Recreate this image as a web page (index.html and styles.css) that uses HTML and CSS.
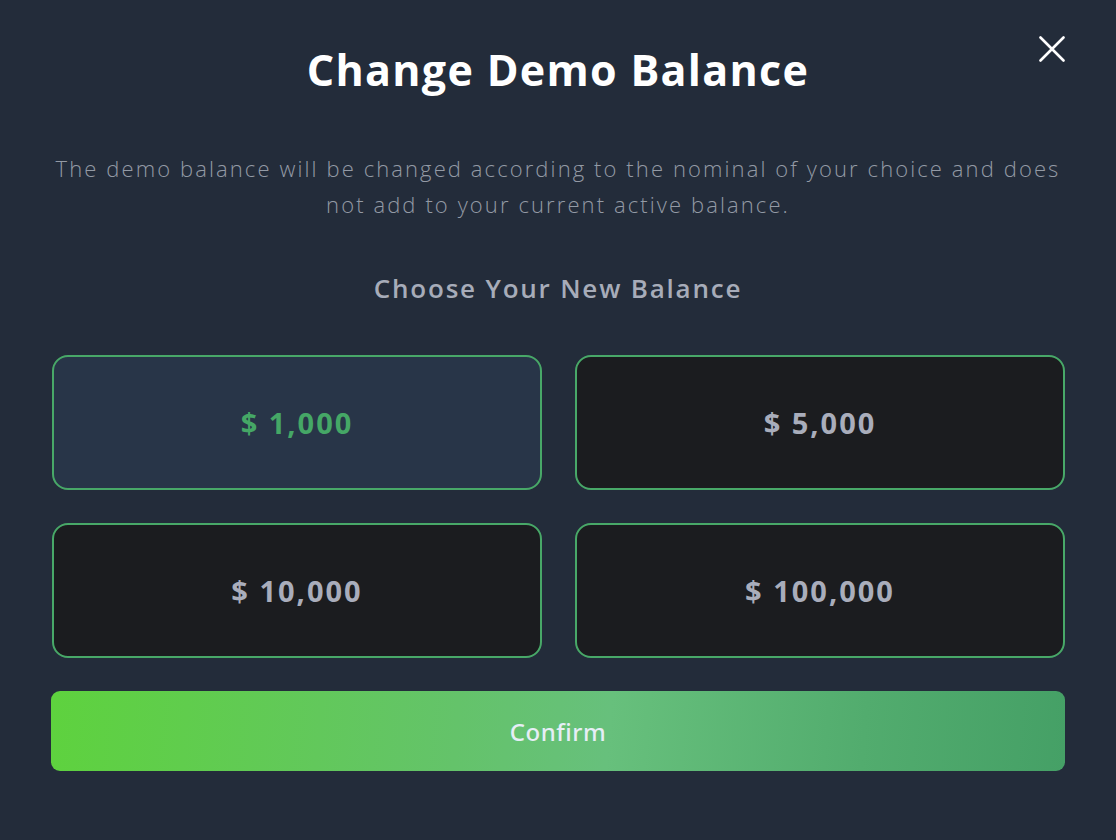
FILE: index.html
```html
<!DOCTYPE html>
<html lang="en">
<head>
<meta charset="utf-8">
<title>Change Demo Balance</title>
<link rel="stylesheet" href="styles.css">
</head>
<body>
<div class="modal">
  <button class="close" aria-label="Close">
    <svg width="26" height="26" viewBox="0 0 26 26"><path d="M1.5 1.5 L24.5 24.5 M24.5 1.5 L1.5 24.5" stroke="#ffffff" stroke-width="2.6" stroke-linecap="round"/></svg>
  </button>
  <h1 class="title">Change Demo Balance</h1>
  <p class="desc">The demo balance will be changed according to the nominal of your choice and does not add to your current active balance.</p>
  <h2 class="subtitle">Choose Your New Balance</h2>
  <div class="options">
    <button class="option selected">$ 1,000</button>
    <button class="option">$ 5,000</button>
    <button class="option">$ 10,000</button>
    <button class="option">$ 100,000</button>
  </div>
  <button class="confirm">Confirm</button>
</div>
</body>
</html>
```
FILE: styles.css
```css
html, body {
  margin: 0;
  padding: 0;
  background: #232c3a;
}
body {
  width: 1116px;
  height: 840px;
  overflow: hidden;
}
.modal {
  position: relative;
  box-sizing: border-box;
  width: 1116px;
  height: 840px;
  padding: 40px 51px 0 51px;
  display: flex;
  flex-direction: column;
  align-items: stretch;
  font-family: "Open Sans", "Noto Sans", sans-serif;
}
.close {
  position: absolute;
  top: 36px;
  right: 51px;
  width: 26px;
  height: 26px;
  padding: 0;
  border: 0;
  background: transparent;
  display: flex;
}
.title {
  margin: 0;
  text-align: center;
  color: #ffffff;
  font-weight: 700;
  font-size: 43px;
  line-height: 60px;
  letter-spacing: 1.3px;
}
.desc {
  margin: 50px auto 0 auto;
  max-width: 1014px;
  text-align: center;
  color: #939aa5;
  font-weight: 300;
  font-size: 22px;
  line-height: 36px;
  letter-spacing: 2.1px;
}
.subtitle {
  margin: 48px 0 0 0;
  text-align: center;
  color: #a7acb9;
  font-weight: 600;
  font-size: 26px;
  line-height: 36px;
  letter-spacing: 1.8px;
}
.options {
  margin-top: 49px;
  display: grid;
  grid-template-columns: 1fr 1fr;
  column-gap: 33px;
  row-gap: 33px;
  padding: 0 0 0 1px;
}
.option {
  height: 135px;
  border: 2px solid #48a868;
  border-radius: 16px;
  background: #1b1c1f;
  color: #a9adbb;
  font-family: "Open Sans", "Noto Sans", sans-serif;
  font-weight: 700;
  font-size: 29px;
  letter-spacing: 2px;
}
.option.selected {
  background: #283548;
  color: #45a766;
}
.confirm {
  margin-top: 33px;
  height: 80px;
  border: 0;
  border-radius: 9px;
  background: linear-gradient(95deg, #5ed23e 0%, #64c36a 40%, #67c07c 55%, #52ac6e 80%, #45a066 100%);
  color: #e6eef6;
  font-family: "Noto Sans", sans-serif;
  font-weight: 500;
  font-size: 24px;
  letter-spacing: 0.5px;
}
```
